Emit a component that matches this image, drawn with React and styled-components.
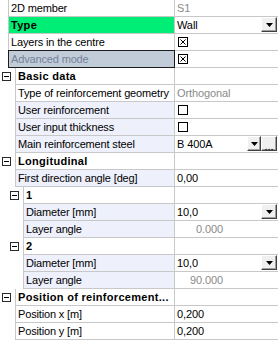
import React from 'react';
import styled, { createGlobalStyle, css } from 'styled-components';

const LINE = '#c8c8c8';
const GREEN = '#00ee76';
const TINT = '#eef0fc';
const MUTED = '#8a8a8a';

const GlobalStyle = createGlobalStyle`
  html, body { margin: 0; padding: 0; background: #ffffff; }
  body {
    font-family: "Liberation Sans", Arial, sans-serif;
    font-size: 11px;
    color: #000;
  }
`;

const Grid = styled.div`
  width: 278px;
  display: flex;
  flex-direction: column;
`;

const Row = styled.div`
  display: flex;
  height: 17px;
`;

const Gutter = styled.div`
  flex: 0 0 ${p => p.$w}px;
  box-sizing: border-box;
  display: flex;
  align-items: center;
  padding-left: ${p => p.$iconX}px;
`;

const Expander = styled.span`
  width: 9px;
  height: 9px;
  box-sizing: border-box;
  border: 1px solid #2a2a2a;
  background: #fff;
  position: relative;
  &::after {
    content: '';
    position: absolute;
    left: 1px;
    right: 1px;
    top: 3px;
    height: 1px;
    background: #000;
  }
`;

const Label = styled.div`
  flex: 0 0 ${p => 175 - p.$indent}px;
  box-sizing: border-box;
  height: 17px;
  border-left: 1px solid ${LINE};
  border-right: 1px solid ${LINE};
  border-bottom: 1px solid ${LINE};
  padding-left: 2px;
  line-height: 16px;
  white-space: nowrap;
  overflow: hidden;
  text-overflow: ellipsis;
  background: ${p => p.$bg || '#fff'};
  font-weight: ${p => (p.$bold ? 700 : 400)};
  letter-spacing: ${p => (p.$bold ? '0.3px' : '-0.15px')};
  position: relative;
  ${p =>
    p.$selected &&
    css`
      overflow: visible;
      background: #c2ccd8;
      color: #73839a;
      &::after {
        content: '';
        position: absolute;
        left: -1px;
        right: -1px;
        top: -1px;
        bottom: -1px;
        border: 1px solid #1c1c1c;
        pointer-events: none;
      }
    `}
`;

const Value = styled.div`
  flex: 1;
  min-width: 0;
  height: 17px;
  box-sizing: border-box;
  border-bottom: 1px solid ${LINE};
  display: flex;
  align-items: center;
  justify-content: ${p => (p.$right ? 'flex-end' : 'flex-start')};
  padding-left: 2px;
  padding-right: ${p => (p.$right ? 55 : 0)}px;
  color: ${p => (p.$muted ? MUTED : '#000')};
  letter-spacing: -0.1px;
  white-space: nowrap;
`;

const ValueText = styled.span`
  flex: ${p => (p.$grow ? 1 : '0 0 auto')};
  line-height: 16px;
`;

const ButtonGroup = styled.div`
  display: flex;
  margin-left: auto;
  margin-right: 1px;
  align-self: flex-start;
`;

const EditButton = styled.div`
  width: ${p => p.$w}px;
  height: 15px;
  box-sizing: border-box;
  background: #f0f0f0;
  border: 1px solid;
  border-color: #ffffff #404040 #404040 #ffffff;
  box-shadow: inset -1px -1px 0 #a0a0a0;
  display: flex;
  align-items: center;
  justify-content: center;
  font-size: 11px;
  line-height: 1;
  letter-spacing: 0;
  padding-top: ${p => (p.$dots ? 5 : 1)}px;
`;

const CheckBox = styled.span`
  width: 10px;
  height: 10px;
  margin-left: 1px;
  display: block;
`;

function Arrow() {
  return (
    <svg width="7" height="4" viewBox="0 0 7 4">
      <path d="M0 0h7L3.5 4z" fill="#000" />
    </svg>
  );
}

function Check({ checked }) {
  return (
    <CheckBox>
      <svg width="10" height="10" viewBox="0 0 10 10">
        <rect x="0.5" y="0.5" width="9" height="9" fill="#fff" stroke="#000" />
        {checked && (
          <path d="M2.5 2.5l5 5M7.5 2.5l-5 5" stroke="#000" strokeWidth="1" />
        )}
      </svg>
    </CheckBox>
  );
}

const rows = [
  { label: '2D member', indent: 8, value: 'S1', muted: true },
  { label: 'Type', indent: 8, bold: true, bg: GREEN, value: 'Wall', editor: 'combo' },
  { label: 'Layers in the centre', indent: 8, editor: 'check', checked: true },
  { label: 'Advanced mode', indent: 8, selected: true, editor: 'check', checked: true },
  { label: 'Basic data', indent: 15, category: true, iconX: 2 },
  { label: 'Type of reinforcement geometry', indent: 15, value: 'Orthogonal', muted: true },
  { label: 'User reinforcement', indent: 15, tint: true, editor: 'check', checked: false },
  { label: 'User input thickness', indent: 15, tint: true, editor: 'check', checked: false },
  { label: 'Main reinforcement steel', indent: 15, tint: true, value: 'B 400A', editor: 'comboMore' },
  { label: 'Longitudinal', indent: 15, category: true, iconX: 2 },
  { label: 'First direction angle [deg]', indent: 15, tint: true, value: '0,00' },
  { label: '1', indent: 23, category: true, iconX: 10 },
  { label: 'Diameter [mm]', indent: 23, tint: true, value: '10,0', editor: 'combo' },
  { label: 'Layer angle', indent: 23, tint: true, value: '0.000', muted: true, right: true },
  { label: '2', indent: 23, category: true, iconX: 10 },
  { label: 'Diameter [mm]', indent: 23, tint: true, value: '10,0', editor: 'combo' },
  { label: 'Layer angle', indent: 23, tint: true, value: '90.000', muted: true, right: true },
  { label: 'Position of reinforcement...', indent: 15, category: true, iconX: 2 },
  { label: 'Position x [m]', indent: 15, value: '0,200' },
  { label: 'Position y [m]', indent: 15, value: '0,200' },
];

function Editor({ row }) {
  if (row.editor === 'check') return <Check checked={row.checked} />;
  const text = row.value ? <ValueText $grow={!!row.editor}>{row.value}</ValueText> : null;
  if (row.editor === 'combo') {
    return (
      <>
        {text}
        <ButtonGroup>
          <EditButton $w={16}>
            <Arrow />
          </EditButton>
        </ButtonGroup>
      </>
    );
  }
  if (row.editor === 'comboMore') {
    return (
      <>
        {text}
        <ButtonGroup>
          <EditButton $w={14}>
            <Arrow />
          </EditButton>
          <EditButton $w={16} $dots>
            ...
          </EditButton>
        </ButtonGroup>
      </>
    );
  }
  return text;
}

export default function App() {
  return (
    <>
      <GlobalStyle />
      <Grid>
        {rows.map((row, i) => (
          <Row key={i}>
            <Gutter $w={row.indent} $iconX={row.iconX || 0}>
              {row.category && <Expander />}
            </Gutter>
            <Label
              $indent={row.indent}
              $bold={row.bold || row.category}
              $bg={row.bg || (row.tint ? TINT : null)}
              $selected={row.selected}
            >
              {row.label}
            </Label>
            <Value $muted={row.muted} $right={row.right}>
              <Editor row={row} />
            </Value>
          </Row>
        ))}
      </Grid>
    </>
  );
}
